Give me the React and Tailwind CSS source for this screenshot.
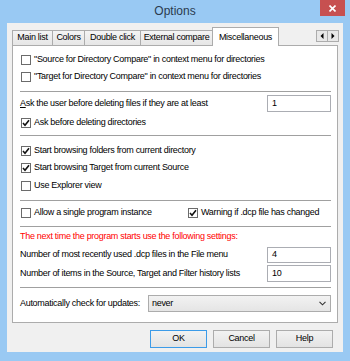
import React from "react";

const F = { fontFamily: '"Liberation Sans", Arial, sans-serif' };

function Check({ checked }) {
  return (
    <div className="w-[10px] h-[10px] border border-[#6b6b6b] bg-white flex items-center justify-center shrink-0">
      {checked && (
        <svg width="8" height="8" viewBox="0 0 8 8">
          <polyline points="1,4 3,6.2 7,1.2" fill="none" stroke="#111" strokeWidth="1.6" />
        </svg>
      )}
    </div>
  );
}

function CheckRow({ checked, children, className = "" }) {
  return (
    <div className={"flex items-center gap-[3px] " + className}>
      <div className="ml-[1px]">
        <Check checked={checked} />
      </div>
      <span>{children}</span>
    </div>
  );
}

function Sep({ className = "" }) {
  return <div className={"h-px bg-[#a0a0a0] shrink-0 " + className} />;
}

function NumInput({ value, className = "" }) {
  return (
    <div className={"w-[64px] border border-[#abadb3] bg-white flex items-center pl-[4px] " + className}>
      {value}
    </div>
  );
}

function Tab({ w, children, first }) {
  return (
    <div
      className={
        "h-[15px] border border-b-0 border-[#acacac] bg-gradient-to-b from-[#f4f4f4] to-[#e6e6e6] flex items-center justify-center shrink-0 " +
        (first ? "" : "-ml-px")
      }
      style={{ width: w }}
    >
      {children}
    </div>
  );
}

function Btn({ children, def }) {
  return (
    <div
      className={
        "w-[57px] h-[18px] flex items-center justify-center border bg-gradient-to-b from-[#f2f2f2] to-[#e3e3e3] " +
        (def ? "border-[#3c9be8]" : "border-[#acacac]")
      }
    >
      {children}
    </div>
  );
}

export default function App() {
  return (
    <div
      className="w-[350px] h-[361px] bg-[#99c9f3] flex flex-col text-[9px] tracking-[-0.3px] text-black overflow-hidden"
      style={F}
    >
      {/* title bar */}
      <div className="h-[23px] relative flex items-center justify-center shrink-0">
        <span className="text-[12px] tracking-normal text-[#2b3a4f] -mt-[1px]">Options</span>
        <div className="absolute top-0 right-[5px] w-[25px] h-[16px] bg-[#c75050] flex items-center justify-center">
          <svg width="7" height="7" viewBox="0 0 7 7">
            <path d="M0.5 0.5 L6.5 6.5 M6.5 0.5 L0.5 6.5" stroke="#fff" strokeWidth="1.6" />
          </svg>
        </div>
      </div>

      {/* client */}
      <div className="mx-[7px] h-[329px] bg-[#f0f0f0] flex flex-col px-[5px] shrink-0">
        {/* tab strip */}
        <div className="h-[22px] pt-[4px] flex items-end shrink-0 relative z-10">
          <Tab w={41} first>Main list</Tab>
          <Tab w={33}>Colors</Tab>
          <Tab w={57}>Double click</Tab>
          <Tab w={73}>External compare</Tab>
          <div className="-ml-[1px] w-[67px] h-[19px] -mb-px border border-b-0 border-[#acacac] bg-white flex items-start justify-center pt-[3px] shrink-0">
            Miscellaneous
          </div>
          <div className="ml-auto mr-[-1px] mb-[3px] flex">
            <div className="w-[12px] h-[12px] border border-[#acacac] bg-[#e8e8e8] flex items-center justify-center">
              <svg width="4" height="6" viewBox="0 0 4 6"><path d="M3.5 0 L0.5 3 L3.5 6Z" fill="#000" /></svg>
            </div>
            <div className="w-[12px] h-[12px] -ml-px border border-[#acacac] bg-[#e8e8e8] flex items-center justify-center">
              <svg width="4" height="6" viewBox="0 0 4 6"><path d="M0.5 0 L3.5 3 L0.5 6Z" fill="#000" /></svg>
            </div>
          </div>
        </div>

        {/* panel */}
        <div className="h-[278px] border border-[#acacac] bg-white flex flex-col pl-[7px] pr-[6px] shrink-0">
          <CheckRow className="mt-[6px] h-[16px]">"Source for Directory Compare" in context menu for directories</CheckRow>
          <CheckRow className="mt-[1px] h-[16px]">"Target for Directory Compare" in context menu for directories</CheckRow>
          <Sep className="mt-[6px]" />
          <div className="mt-[3px] h-[17px] flex items-center justify-between">
            <span><span className="underline">A</span>sk the user before deleting files if they are at least</span>
            <NumInput value="1" className="h-[17px]" />
          </div>
          <CheckRow checked className="mt-[3px] h-[16px]">Ask before deleting directories</CheckRow>
          <Sep className="mt-[4px]" />
          <CheckRow checked className="mt-[7px] h-[16px]">Start browsing folders from current directory</CheckRow>
          <CheckRow checked className="mt-[1px] h-[16px]">Start browsing Target from current Source</CheckRow>
          <CheckRow className="mt-[2px] h-[16px]">Use Explorer view</CheckRow>
          <Sep className="mt-[6px]" />
          <div className="mt-[4px] h-[16px] flex items-center">
            <CheckRow className="w-[167px]">Allow a single program instance</CheckRow>
            <CheckRow checked>Warning if .dcp file has changed</CheckRow>
          </div>
          <Sep className="mt-[5px]" />
          <div className="mt-[2px] h-[16px] flex items-center text-[#ff0000]">
            The next time the program starts use the following settings:
          </div>
          <div className="mt-[2px] h-[16px] flex items-center justify-between">
            <span>Number of most recently used .dcp files in the File menu</span>
            <NumInput value="4" className="h-[16px]" />
          </div>
          <div className="mt-[2px] h-[17px] flex items-center justify-between">
            <span>Number of items in the Source, Target and Filter history lists</span>
            <NumInput value="10" className="h-[17px]" />
          </div>
          <Sep className="mt-[5px]" />
          <div className="mt-[7px] h-[17px] flex items-center">
            <span className="w-[128px]">Automatically check for updates:</span>
            <div className="flex-1 h-[17px] border border-[#acacac] bg-gradient-to-b from-[#f2f2f2] to-[#e5e5e5] flex items-center justify-between pl-[3px] pr-[4px]">
              <span>never</span>
              <svg width="7" height="5" viewBox="0 0 7 5">
                <path d="M0.5 0.8 L3.5 3.8 L6.5 0.8" fill="none" stroke="#333" strokeWidth="1.1" />
              </svg>
            </div>
          </div>
        </div>

        {/* buttons */}
        <div className="mt-[7px] flex justify-end gap-[6px] pr-[5px]">
          <Btn def>OK</Btn>
          <Btn>Cancel</Btn>
          <Btn>Help</Btn>
        </div>
      </div>
    </div>
  );
}
